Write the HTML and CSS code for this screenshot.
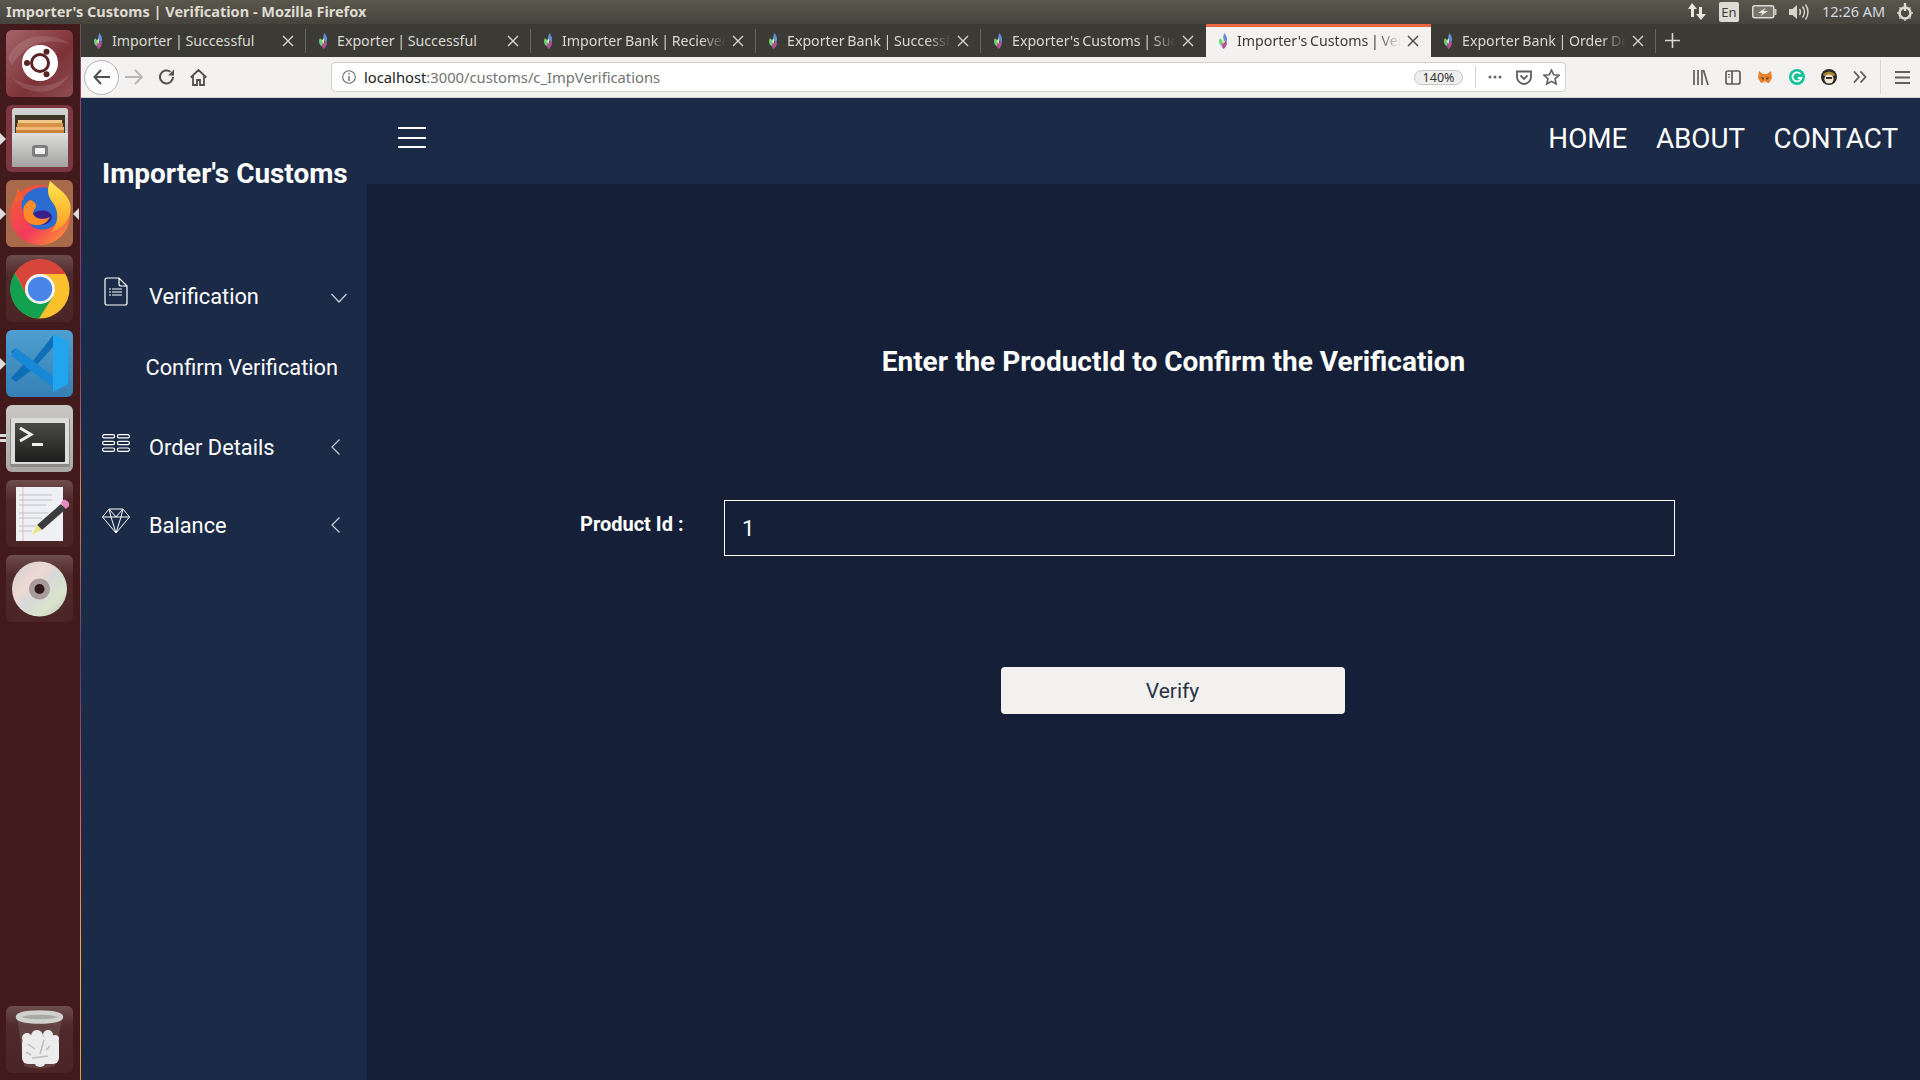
FILE: index.html
```html
<!DOCTYPE html>
<html lang="en">
<head>
    <meta charset="UTF-8">
    <title>Importer's Customs | Verification</title>
    <link rel="stylesheet" href="styles.css">
</head>
<body>
    <svg class="defs" width="0" height="0">
        <symbol id="fav" viewBox="0 0 12 18">
            <path d="M7 0C10 4 11 7 9 11L6 8C5 5 6 3 7 0Z" fill="#5f8fd8"/>
            <path d="M2 6C0 9 1 13 4 15L6 11C5 9 4 7 2 6Z" fill="#6fcf7f"/>
            <path d="M9 9C11 12 9 16 6 18C4 16 4 14 5 12C6 11 8 10 9 9Z" fill="#b0509a"/>
            <path d="M6 6C7 8 7 10 6 12L4 9Z" fill="#e8e2a0"/>
        </symbol>
        <symbol id="close" viewBox="0 0 12 12">
            <path d="M1 1L11 11M11 1L1 11" stroke="currentColor" stroke-width="1.4" fill="none"/>
        </symbol>
        <symbol id="chev-left" viewBox="0 0 16 16">
            <path d="M8.5 0.5L1 8L8.5 15.5" stroke="#c9ced8" stroke-width="1.2" fill="none"/>
        </symbol>
    </svg>

    <div class="topbar">
        <div class="win-title">Importer's Customs | Verification - Mozilla Firefox</div>
        <div class="tray">
            <svg class="tray-arrows" width="20" height="20" viewBox="0 0 20 20"><path d="M5 1L10 7H7V15H4V7H1Z M14 18L9 12H12V5H15V12H19Z" fill="#e8e6e0"/></svg>
            <span class="tray-lang">En</span>
            <svg class="tray-battery" width="25" height="14" viewBox="0 0 25 14"><rect x="0.75" y="0.75" width="21" height="12" rx="2" fill="#77756c" stroke="#dedbd4" stroke-width="1.5"/><rect x="22.5" y="4" width="2" height="6" fill="#cfccc4"/><path d="M14 2.5L6 8H10.5L8 11.5L16 6H11.5Z" fill="#e8e6e0"/></svg>
            <svg class="tray-sound" width="20" height="18" viewBox="0 0 20 18"><path d="M0 6H3.5L8 2V16L3.5 12H0Z" fill="#d8d5cd"/><path d="M10.5 6C11.8 8 11.8 10 10.5 12M13.5 3.5C16 7 16 11 13.5 14.5M16.5 1.5C19.8 6 19.8 12 16.5 16.5" stroke="#d8d5cd" stroke-width="1.4" fill="none"/></svg>
            <span class="tray-time">12:26 AM</span>
            <svg class="tray-power" width="18" height="18" viewBox="0 0 18 18"><circle cx="9" cy="10" r="5.5" fill="none" stroke="#dedbd4" stroke-width="2.6"/><path d="M9 0V8" stroke="#dedbd4" stroke-width="2.4"/><path d="M9 2V18M1 10H17M3.4 4.4L14.6 15.6M14.6 4.4L3.4 15.6" stroke="#dedbd4" stroke-width="1.4" stroke-dasharray="2 12.5"/></svg>
        </div>
    </div>

    <div class="desktop">
        <aside class="launcher">
            <div class="dock-item">
                <div class="tile tile-ubuntu">
                    <svg width="67" height="67" viewBox="0 0 67 67">
                        <path d="M2 28C12 4 44 0 64 14C44 8 18 12 6 36Z M6 48C20 66 50 68 64 44C50 58 26 60 6 48Z" fill="#fff" opacity=".12"/>
                        <circle cx="34" cy="33" r="18" fill="#fff"/>
                        <circle cx="34" cy="33" r="8.5" fill="none" stroke="#5a2323" stroke-width="3"/>
                        <circle cx="21" cy="33" r="3" fill="#5a2323"/>
                        <circle cx="40.5" cy="21.7" r="3" fill="#5a2323"/>
                        <circle cx="40.5" cy="44.3" r="3" fill="#5a2323"/>
                    </svg>
                </div>
            </div>
            <div class="dock-item">
                <span class="pip pip-left"></span>
                <div class="tile tile-files">
                    <svg width="67" height="67" viewBox="0 0 67 67">
                        <defs>
                            <linearGradient id="cabinet" x1="0" y1="0" x2="0" y2="1"><stop offset="0" stop-color="#d4d4d2"/><stop offset="1" stop-color="#9c9c9a"/></linearGradient>
                            <linearGradient id="drawer" x1="0" y1="0" x2="0" y2="1"><stop offset="0" stop-color="#dededc"/><stop offset="1" stop-color="#a2a2a0"/></linearGradient>
                        </defs>
                        <path d="M6 6Q6 3 9 3H59Q62 3 62 6V62H6Z" fill="url(#cabinet)"/>
                        <rect x="9" y="10" width="50" height="19" fill="#3f352b"/>
                        <rect x="12" y="15" width="44" height="3" fill="#f0c88a"/>
                        <rect x="11" y="18" width="46" height="4" fill="#d8924a"/>
                        <rect x="10" y="22" width="48" height="3" fill="#efb772"/>
                        <rect x="10" y="25" width="48" height="4" fill="#c9823c"/>
                        <rect x="6" y="28" width="56" height="34" rx="1" fill="url(#drawer)"/>
                        <rect x="26" y="40" width="16" height="12" rx="3" fill="#7f7f7f"/>
                        <rect x="29" y="43" width="10" height="6" rx="1" fill="#f0f0f0"/>
                    </svg>
                </div>
            </div>
            <div class="dock-item">
                <span class="pip pip-left"></span>
                <span class="pip pip-right"></span>
                <div class="tile tile-firefox">
                    <svg width="67" height="67" viewBox="0 0 67 67">
                        <defs>
                            <linearGradient id="fox-body" x1="0" y1="0" x2="1" y2="1"><stop offset="0" stop-color="#f2622e"/><stop offset=".55" stop-color="#f33a5c"/><stop offset="1" stop-color="#ffa52c"/></linearGradient>
                            <linearGradient id="fox-flame" x1="0" y1="0" x2="0" y2="1"><stop offset="0" stop-color="#ffe84e"/><stop offset="1" stop-color="#ff9a22"/></linearGradient>
                        </defs>
                        <circle cx="34" cy="35" r="30" fill="url(#fox-body)"/>
                        <path d="M16 20C22 8 38 4 48 10C56 16 56 30 52 40C46 52 30 52 24 44C20 38 14 30 16 20Z" fill="#2a6cd0"/>
                        <path d="M26 34C34 28 46 30 46 38C42 48 28 46 24 38Z" fill="#3a1f8f"/>
                        <path d="M24 20C30 22 32 26 28 30C24 36 34 42 44 37C38 50 20 46 18 36C16 28 18 24 24 20Z" fill="#ff8a2a"/>
                        <path d="M44 1C41 10 41 15 47 23C53 31 53 43 45 52C60 48 67 34 64 23C61 13 52 9 44 1Z" fill="url(#fox-flame)"/>
                        <path d="M12 8L18 20L8 22Z" fill="#f2622e"/>
                    </svg>
                </div>
            </div>
            <div class="dock-item">
                <div class="tile tile-dark">
                    <svg width="67" height="67" viewBox="0 0 67 67">
                        <circle cx="34" cy="34" r="29.5" fill="#fbc02d"/>
                        <path d="M34 19H59.5A29.5 29.5 0 0 0 9 18L21 41.5A15 15 0 0 1 34 19Z" fill="#d8453a"/>
                        <path d="M9 18A29.5 29.5 0 0 0 33 63.5L47 41.5H21Z" fill="#12a150"/>
                        <circle cx="34" cy="34" r="15" fill="#f3f3f3"/>
                        <circle cx="34" cy="34" r="12.2" fill="#4a86ea"/>
                    </svg>
                </div>
            </div>
            <div class="dock-item">
                <span class="pip pip-left"></span>
                <div class="tile tile-code">
                    <svg width="67" height="67" viewBox="0 0 67 67">
                        <path d="M5 22L10 18L27 31L48 4L48 16L27 39L10 52L5 48L17 35Z" fill="#0e6fb8"/>
                        <path d="M10 18L48 47V58L5 26Z" fill="#1789d6"/>
                        <path d="M47 4L62 11V54L47 62Z" fill="#22a5f1"/>
                    </svg>
                </div>
            </div>
            <div class="dock-item">
                <span class="pip pip-left pip-double"></span>
                <div class="tile tile-term">
                    <svg width="67" height="67" viewBox="0 0 67 67">
                        <defs><linearGradient id="term-screen" x1="0" y1="0" x2="0" y2="1"><stop offset="0" stop-color="#4a4a48"/><stop offset="1" stop-color="#1e1e1e"/></linearGradient></defs>
                        <rect x="4" y="13" width="60" height="49" rx="2" fill="#8e8c88"/>
                        <rect x="5" y="13" width="58" height="46" fill="#dcdcda"/>
                        <rect x="9" y="18" width="50" height="39" rx="1" fill="url(#term-screen)"/>
                        <path d="M14 23L25 29.5L14 36" stroke="#eee" stroke-width="3" fill="none"/>
                        <rect x="26" y="38" width="11" height="3" fill="#eee"/>
                    </svg>
                </div>
            </div>
            <div class="dock-item">
                <div class="tile tile-dark">
                    <svg width="67" height="67" viewBox="0 0 67 67">
                        <rect x="10" y="7" width="47" height="54" fill="#eef0f4"/>
                        <path d="M17 7V61" stroke="#e9b7b7"/>
                        <path d="M13 15H46M13 20H46M13 25H40M13 33H42M13 38H36M13 46H30M13 51H26" stroke="#bfc2c9" stroke-width="1.2"/>
                        <path d="M55 24L60 29L36 50L31 45Z" fill="#3c3c3c"/>
                        <path d="M55 24L60 29L63 26Q64 23 61 21Q58 18 56 21Z" fill="#e58bc4"/>
                        <path d="M31 45L36 50L26 55Z" fill="#efe28a"/>
                    </svg>
                </div>
            </div>
            <div class="dock-item">
                <div class="tile tile-dark">
                    <svg width="67" height="67" viewBox="0 0 67 67">
                        <defs><linearGradient id="disc" x1="0" y1="0" x2="1" y2="1"><stop offset="0" stop-color="#cfcfcf"/><stop offset=".35" stop-color="#eed9d2"/><stop offset=".5" stop-color="#d9d9d9"/><stop offset=".75" stop-color="#d8e4cd"/><stop offset="1" stop-color="#bdbdbd"/></linearGradient></defs>
                        <circle cx="33.5" cy="34" r="27.5" fill="url(#disc)"/>
                        <circle cx="33.5" cy="34" r="10.5" fill="#a79a9a"/>
                        <circle cx="33.5" cy="34" r="5" fill="#2f1a1a"/>
                    </svg>
                </div>
            </div>
            <div class="dock-item dock-trash">
                <div class="tile tile-dark">
                    <svg width="67" height="67" viewBox="0 0 67 67">
                        <path d="M11 10L18 60Q33 65 49 60L56 10Z" fill="#fff" opacity=".12"/>
                        <g fill="#ececec">
                            <rect x="16" y="31" width="37" height="27" rx="6"/>
                            <circle cx="21" cy="32" r="5"/><circle cx="31" cy="30" r="6"/><circle cx="42" cy="29" r="5"/><circle cx="49" cy="33" r="4"/>
                            <circle cx="34" cy="55" r="6"/>
                        </g>
                        <path d="M22 38L29 43M38 34L34 48M26 52L42 50M44 40L40 44M20 46L25 49" stroke="#bcbcbc" stroke-width="1.5"/>
                        <ellipse cx="33.5" cy="11" rx="21.5" ry="4.5" fill="#a8a8a4" stroke="#d0d0cc" stroke-width="4.5"/>
                    </svg>
                </div>
            </div>
        </aside>

        <div class="browser">
            <div class="tabs">
                <div class="tab"><svg class="tab-fav"><use href="#fav"/></svg><span class="tab-title">Importer | Successful</span><svg class="tab-close"><use href="#close"/></svg></div>
                <div class="tab"><svg class="tab-fav"><use href="#fav"/></svg><span class="tab-title">Exporter | Successful</span><svg class="tab-close"><use href="#close"/></svg></div>
                <div class="tab"><svg class="tab-fav"><use href="#fav"/></svg><span class="tab-title fade">Importer Bank | Recieved</span><svg class="tab-close"><use href="#close"/></svg></div>
                <div class="tab"><svg class="tab-fav"><use href="#fav"/></svg><span class="tab-title fade">Exporter Bank | Successful</span><svg class="tab-close"><use href="#close"/></svg></div>
                <div class="tab no-sep"><svg class="tab-fav"><use href="#fav"/></svg><span class="tab-title fade">Exporter's Customs | Successful</span><svg class="tab-close"><use href="#close"/></svg></div>
                <div class="tab active"><svg class="tab-fav"><use href="#fav"/></svg><span class="tab-title fade">Importer's Customs | Verification</span><svg class="tab-close"><use href="#close"/></svg></div>
                <div class="tab"><svg class="tab-fav"><use href="#fav"/></svg><span class="tab-title fade">Exporter Bank | Order Details</span><svg class="tab-close"><use href="#close"/></svg></div>
                <svg class="tab-new" width="15" height="15" viewBox="0 0 15 15"><path d="M7.5 0V15M0 7.5H15" stroke="#dad8d2" stroke-width="1.6"/></svg>
            </div>

            <div class="toolbar">
                <div class="back-btn">
                    <svg width="18" height="16" viewBox="0 0 18 16"><path d="M8 1L1.5 8L8 15M2 8H17" stroke="#505050" stroke-width="2" fill="none"/></svg>
                </div>
                <svg class="tool-forward" width="18" height="16" viewBox="0 0 18 16"><path d="M10 1L17 8L10 15M16 8H0" stroke="#b8b8b8" stroke-width="2" fill="none"/></svg>
                <svg class="tool-reload" width="16" height="16" viewBox="0 0 16 16"><path d="M14 8A6.5 6.5 0 1 1 11.5 2.8" stroke="#505050" stroke-width="2" fill="none"/><path d="M15 0.5V6.5H9Z" fill="#505050"/></svg>
                <svg class="tool-home" width="17" height="17" viewBox="0 0 17 17"><path d="M0.7 8.5L8.5 1L16.3 8.5M3 7V16H7V11H10V16H14V7" stroke="#505050" stroke-width="1.8" fill="none"/></svg>

                <div class="urlbar">
                    <svg class="url-info" width="14" height="14" viewBox="0 0 14 14"><circle cx="7" cy="7" r="6.3" fill="none" stroke="#6a6a6a" stroke-width="1.1"/><path d="M7 6V11M7 3V4.6" stroke="#6a6a6a" stroke-width="1.4"/></svg>
                    <span class="url-text"><span class="url-host">localhost</span>:3000/customs/c_ImpVerifications</span>
                    <span class="url-zoom">140%</span>
                    <span class="url-sep"></span>
                    <svg class="url-dots" width="14" height="4" viewBox="0 0 14 4"><circle cx="2" cy="2" r="1.5" fill="#666"/><circle cx="7" cy="2" r="1.5" fill="#666"/><circle cx="12" cy="2" r="1.5" fill="#666"/></svg>
                    <svg class="url-pocket" width="16" height="15" viewBox="0 0 16 15"><path d="M1 1.5H15V7A7 7 0 0 1 1 7Z" fill="none" stroke="#5f5f5f" stroke-width="1.8"/><path d="M4.5 5.5L8 9L11.5 5.5" fill="none" stroke="#5f5f5f" stroke-width="1.8"/></svg>
                    <svg class="url-star" width="17" height="16" viewBox="0 0 17 16"><path d="M8.5 1L10.7 5.8L16 6.3L12 9.8L13.2 15L8.5 12.3L3.8 15L5 9.8L1 6.3L6.3 5.8Z" fill="none" stroke="#5f5f5f" stroke-width="1.6"/></svg>
                </div>

                <div class="tool-right">
                    <svg width="16" height="15" viewBox="0 0 16 15"><path d="M1 0V15M5 0V15M9 0V15M10.5 0L15 15" stroke="#5f5f5f" stroke-width="1.7"/></svg>
                    <svg width="16" height="15" viewBox="0 0 16 15"><rect x="1" y="1" width="14" height="13" rx="2" fill="none" stroke="#5f5f5f" stroke-width="1.7"/><path d="M7 1V14" stroke="#5f5f5f" stroke-width="1.7"/><path d="M3 4.5H5M3 7H5" stroke="#5f5f5f"/></svg>
                    <svg width="16" height="15" viewBox="0 0 16 15"><path d="M2 1L6 4H10L14 1L15 8L12 13L9 12H7L4 13L1 8Z" fill="#e8802c"/><path d="M4 7L7 8L6 10ZM12 7L9 8L10 10Z" fill="#5a3a20"/><path d="M7 11H9V13H7Z" fill="#d8c8b0"/></svg>
                    <svg width="16" height="16" viewBox="0 0 16 16"><circle cx="8" cy="8" r="8" fill="#15c39a"/><path d="M11.5 5A4.5 4.5 0 1 0 12.4 9H8.8" fill="none" stroke="#fff" stroke-width="1.8"/></svg>
                    <svg width="16" height="16" viewBox="0 0 16 16"><circle cx="8" cy="8" r="8" fill="#2c2a24"/><path d="M2 5Q8 0 14 5L13 7H3Z" fill="#a8842e"/><circle cx="8" cy="10" r="4.6" fill="#f1e6da"/><path d="M5 8H11V10H5Z" fill="#3a3026"/></svg>
                    <svg width="14" height="12" viewBox="0 0 14 12"><path d="M1 0.5L6 6L1 11.5M7.5 0.5L12.5 6L7.5 11.5" fill="none" stroke="#5f5f5f" stroke-width="1.8"/></svg>
                    <span class="tool-sep"></span>
                    <svg width="15" height="13" viewBox="0 0 15 13"><path d="M0 1H15M0 6.5H15M0 12H15" stroke="#5f5f5f" stroke-width="1.8"/></svg>
                </div>
            </div>

            <div class="page">
                <nav class="sidebar">
                    <div class="brand">Importer's Customs</div>
                    <ul class="menu">
                        <li class="menu-item">
                            <span class="menu-icon">
                                <svg width="24" height="29" viewBox="0 0 24 29"><path d="M3 1H15L23 9V26Q23 28 21 28H3Q1 28 1 26V3Q1 1 3 1Z M15 1V7Q15 9 17 9H23" fill="none" stroke="#fff" stroke-width="1.2"/><path d="M5 12H7M8 12H18M5 15H7M8 15H18M5 18H7M8 18H18" stroke="#fff" stroke-width="1.1"/></svg>
                            </span>
                            <span class="menu-label">Verification</span>
                            <svg class="menu-chev chev-down" width="16" height="16" viewBox="0 0 16 16"><path d="M0.5 4L8 12L15.5 4" stroke="#c9ced8" stroke-width="1.2" fill="none"/></svg>
                        </li>
                        <li class="menu-sub">Confirm Verification</li>
                        <li class="menu-item item-order">
                            <span class="menu-icon">
                                <svg width="28" height="18" viewBox="0 0 28 18"><g fill="none" stroke="#fff" stroke-width="1.2"><rect x=".6" y=".6" width="12" height="3.3" rx="1.6"/><rect x="15.4" y=".6" width="12" height="3.3" rx="1.6"/><rect x=".6" y="7.3" width="12" height="3.3" rx="1.6"/><rect x="15.4" y="7.3" width="12" height="3.3" rx="1.6"/><rect x=".6" y="14" width="12" height="3.3" rx="1.6"/><rect x="15.4" y="14" width="12" height="3.3" rx="1.6"/></g></svg>
                            </span>
                            <span class="menu-label">Order Details</span>
                            <svg class="menu-chev"><use href="#chev-left"/></svg>
                        </li>
                        <li class="menu-item">
                            <span class="menu-icon">
                                <svg width="28" height="26" viewBox="0 0 28 26"><path d="M7 1H21L27.5 9L14 25L.5 9Z M.5 9H27.5M7 1L9 9L14 25L19 9L21 1M7 1L14 9L21 1" fill="none" stroke="#fff" stroke-width="1"/></svg>
                            </span>
                            <span class="menu-label">Balance</span>
                            <svg class="menu-chev"><use href="#chev-left"/></svg>
                        </li>
                    </ul>
                </nav>

                <div class="content">
                    <header class="header">
                        <div class="burger"><span></span><span></span><span></span></div>
                        <div class="nav-links">
                            <a class="nav-link">HOME</a>
                            <a class="nav-link">ABOUT</a>
                            <a class="nav-link">CONTACT</a>
                        </div>
                    </header>
                    <main class="main">
                        <h2 class="form-title">Enter the ProductId to Confirm the Verification</h2>
                        <div class="form-row">
                            <label class="form-label" for="productId">Product Id :</label>
                            <input class="form-input" id="productId" type="text" value="1">
                        </div>
                        <div class="form-actions">
                            <button class="verify-btn">Verify</button>
                        </div>
                    </main>
                </div>
            </div>
        </div>
    </div>
</body>
</html>
```

FILE: styles.css
```css
*{
    box-sizing: border-box;
}
html, body{
    margin: 0;
    height: 100%;
    overflow: hidden;
}
body{
    width: 1920px;
    height: 1080px;
    display: flex;
    flex-direction: column;
    font-family: "Roboto", sans-serif;
    background-color: #151f38;
}
.defs{
    position: absolute;
}

/* ubuntu top panel */
.topbar{
    height: 24px;
    flex: none;
    display: flex;
    justify-content: space-between;
    padding: 2px 6px 0 6px;
    background: linear-gradient(#5a574c, #45433c);
    color: #dfdbd2;
    font-family: "Noto Sans", sans-serif;
}
.win-title{
    font-size: 14.5px;
    font-weight: 700;
    line-height: 18px;
}
.tray{
    display: flex;
    align-items: flex-start;
    height: 20px;
}
.tray svg{
    flex: none;
}
.tray-arrows{
    margin-right: 12px;
}
.tray-lang{
    width: 20px;
    height: 20px;
    margin-right: 13px;
    border-radius: 2px;
    background-color: #dedbd4;
    color: #3c3b37;
    font-size: 13px;
    line-height: 20px;
    text-align: center;
}
.tray-battery{
    margin-top: 3px;
    margin-right: 12px;
}
.tray-sound{
    margin-top: 1px;
    margin-right: 13px;
}
.tray-time{
    width: 68px;
    font-size: 14.5px;
    line-height: 18px;
    color: #d5d9e0;
}
.tray-power{
    margin-left: 6px;
    margin-top: 1px;
}

.desktop{
    flex: 1;
    display: flex;
    min-height: 0;
}

/* launcher */
.launcher{
    width: 81px;
    flex: none;
    display: flex;
    flex-direction: column;
    gap: 8px;
    padding: 6px 0 7px 0;
    background-color: #431a1b;
    border-right: 1px solid;
    border-image: linear-gradient(#6a5060, #c2345c 15%, #6b3b7c 30%, #f08040 45%, #4d3a75 60%, #f05a4a 75%, #fbb040 90%, #ff9030) 1;
}
.dock-item{
    position: relative;
    display: flex;
    padding-left: 6px;
}
.dock-trash{
    margin-top: auto;
}
.tile{
    width: 67px;
    height: 67px;
    border-radius: 6px;
    overflow: hidden;
}
.tile svg{
    display: block;
}
.tile-ubuntu{
    background: linear-gradient(135deg, #a5646a, #7c3338 60%, #8f4d52);
}
.tile-files{
    background-color: #7d3740;
}
.tile-firefox{
    background-color: #a86a4a;
}
.tile-dark{
    background: linear-gradient(#6e4d4d, #4f2a2a 30%, #4b2525);
}
.tile-code{
    background: linear-gradient(#4f9fd0, #3580b4);
}
.tile-term{
    background: linear-gradient(#c9c8c6, #a9a8a6);
}
.pip{
    position: absolute;
    top: 28px;
    width: 0;
    height: 0;
    border-top: 6px solid transparent;
    border-bottom: 6px solid transparent;
}
.pip-left{
    left: 0;
    border-left: 6px solid #dcdcdc;
}
.pip-right{
    right: 1px;
    border-right: 6px solid #dcdcdc;
}
.pip-double{
    top: 29px;
    width: 6px;
    height: 8px;
    border: 0;
    border-top: 3px solid #dcdcdc;
    border-bottom: 3px solid #dcdcdc;
}

.browser{
    flex: 1;
    min-width: 0;
    display: flex;
    flex-direction: column;
}

/* tabs */
.tabs{
    height: 33px;
    flex: none;
    display: flex;
    background-color: #3c3a35;
    font-family: "Noto Sans", sans-serif;
}
.tab{
    position: relative;
    width: 225px;
    flex: none;
    display: flex;
    align-items: center;
    padding: 0 11px 0 12px;
    color: #d9d8d2;
    font-size: 14.2px;
    word-spacing: -1px;
}
.tab::after{
    content: "";
    position: absolute;
    right: 0;
    top: 5px;
    height: 24px;
    width: 1px;
    background-color: rgba(255,255,255,0.22);
}
.tab.no-sep::after, .tab.active::after{
    display: none;
}
.tab.active{
    background-color: #f3f2f1;
    border-top: 3px solid #e9673f;
    padding-bottom: 3px;
    color: #3a3a3a;
}
.tab-fav{
    width: 11px;
    height: 16px;
    flex: none;
    margin-right: 8px;
}
.tab-title{
    flex: 1;
    min-width: 0;
    white-space: nowrap;
    overflow: hidden;
}
.tab-title.fade{
    -webkit-mask-image: linear-gradient(to right, #000 85%, transparent);
    mask-image: linear-gradient(to right, #000 85%, transparent);
}
.tab-close{
    width: 12px;
    height: 12px;
    flex: none;
    margin-left: 6px;
    margin-right: 1px;
    color: #d5d4ce;
}
.active .tab-close{
    color: #444;
}
.tab-new{
    margin: 9px 0 0 9px;
}

/* toolbar */
.toolbar{
    height: 41px;
    flex: none;
    display: flex;
    align-items: center;
    padding-left: 3px;
    background-color: #f3f2f1;
    border-bottom: 1px solid #cfcfcd;
}
.toolbar svg{
    flex: none;
}
.back-btn{
    width: 35px;
    height: 35px;
    flex: none;
    display: flex;
    align-items: center;
    justify-content: center;
    border-radius: 50%;
    border: 1px solid #b4b4b4;
    background-color: #fcfcfc;
}
.tool-forward{
    margin-left: 6px;
}
.tool-reload{
    margin-left: 16px;
}
.tool-home{
    margin-left: 15px;
}
.urlbar{
    width: 1235px;
    height: 30px;
    margin-left: 124px;
    flex: none;
    display: flex;
    align-items: center;
    padding-left: 10px;
    background-color: #fff;
    border: 1px solid #cfcfcd;
    border-radius: 4px;
    font-family: "Noto Sans", sans-serif;
    font-size: 14.75px;
    color: #737373;
}
.url-text{
    margin-left: 8px;
    flex: 1;
}
.url-host{
    color: #222;
}
.url-zoom{
    width: 49px;
    height: 15px;
    border: 1px solid #c8c8c8;
    border-radius: 8px;
    background-color: #efefef;
    color: #333;
    font-size: 12.5px;
    line-height: 13px;
    text-align: center;
}
.url-sep{
    width: 1px;
    height: 22px;
    margin: 0 12px;
    background-color: #d4d4d4;
}
.url-pocket{
    margin-left: 14px;
}
.url-star{
    margin: 0 5px 0 11px;
}
.tool-right{
    display: flex;
    align-items: center;
    margin-left: 127px;
}
.tool-right svg{
    margin-right: 16px;
}
.tool-sep{
    width: 1px;
    height: 34px;
    margin: 0 14px 0 -3px;
    background-color: #d4d4d4;
}

/* page */
.page{
    flex: 1;
    min-height: 0;
    display: flex;
}
.sidebar{
    width: 286px;
    flex: none;
    background-color: #1b2a47;
    color: #fff;
}
.brand{
    height: 166px;
    padding: 57px 0 0 21px;
    font-size: 27.9px;
    font-weight: 700;
    line-height: 38px;
}
.menu{
    list-style: none;
    margin: 0;
    padding: 0;
    display: flex;
    flex-direction: column;
    gap: 14px;
}
.menu-item{
    height: 64px;
    display: flex;
    align-items: center;
    padding: 0 20px 0 21px;
    font-size: 21.8px;
}
.item-order{
    margin-top: 1px;
}
.menu-icon{
    width: 47px;
    flex: none;
    display: flex;
    margin-bottom: 9px;
}
.menu-icon svg{
    margin-left: 2px;
}
.item-order .menu-icon svg, .menu-item:last-child .menu-icon svg{
    margin-left: 0;
}
.menu-label{
    flex: 1;
}
.menu-chev{
    width: 16px;
    height: 16px;
    flex: none;
}
.chev-down{
    margin-top: 3px;
}
.menu-sub{
    height: 64px;
    margin-top: -6px;
    padding-left: 64.5px;
    font-size: 21.8px;
    line-height: 64px;
}

.content{
    flex: 1;
    min-width: 0;
    display: flex;
    flex-direction: column;
}
.header{
    height: 86px;
    flex: none;
    display: flex;
    align-items: center;
    justify-content: space-between;
    padding: 0 22px 4px 31px;
    background-color: #1b2a47;
}
.burger{
    width: 28px;
    margin-bottom: 3px;
    display: flex;
    flex-direction: column;
    gap: 7.5px;
}
.burger span{
    height: 2px;
    background-color: #fff;
}
.nav-links{
    display: flex;
    gap: 28.5px;
}
.nav-link{
    color: #fff;
    font-size: 27.8px;
    line-height: 36px;
}
.main{
    flex: 1;
    padding: 0 0 0 60px;
    background-color: #151f38;
}
.form-title{
    margin: 158px 0 0 0;
    color: #fff;
    font-size: 28px;
    font-weight: 700;
    line-height: 40px;
    text-align: center;
}
.form-row{
    display: flex;
    margin: 118px 0 0 153px;
}
.form-label{
    width: 144px;
    flex: none;
    padding-top: 12px;
    color: #fff;
    font-size: 20px;
    font-weight: 700;
    line-height: 24px;
}
.form-input{
    width: 951px;
    height: 56px;
    padding: 0 17px;
    background-color: transparent;
    border: 1px solid #fff;
    border-radius: 0;
    outline: 0;
    color: #fff;
    font-family: "Roboto", sans-serif;
    font-size: 22.4px;
}
.form-actions{
    display: flex;
    justify-content: center;
    margin-top: 111px;
    padding-right: 2px;
}
.verify-btn{
    width: 344px;
    height: 47px;
    background-color: #f3f1ef;
    border: 0;
    border-radius: 4px;
    color: #2a3344;
    font-family: "Roboto", sans-serif;
    font-size: 21px;
}
```
